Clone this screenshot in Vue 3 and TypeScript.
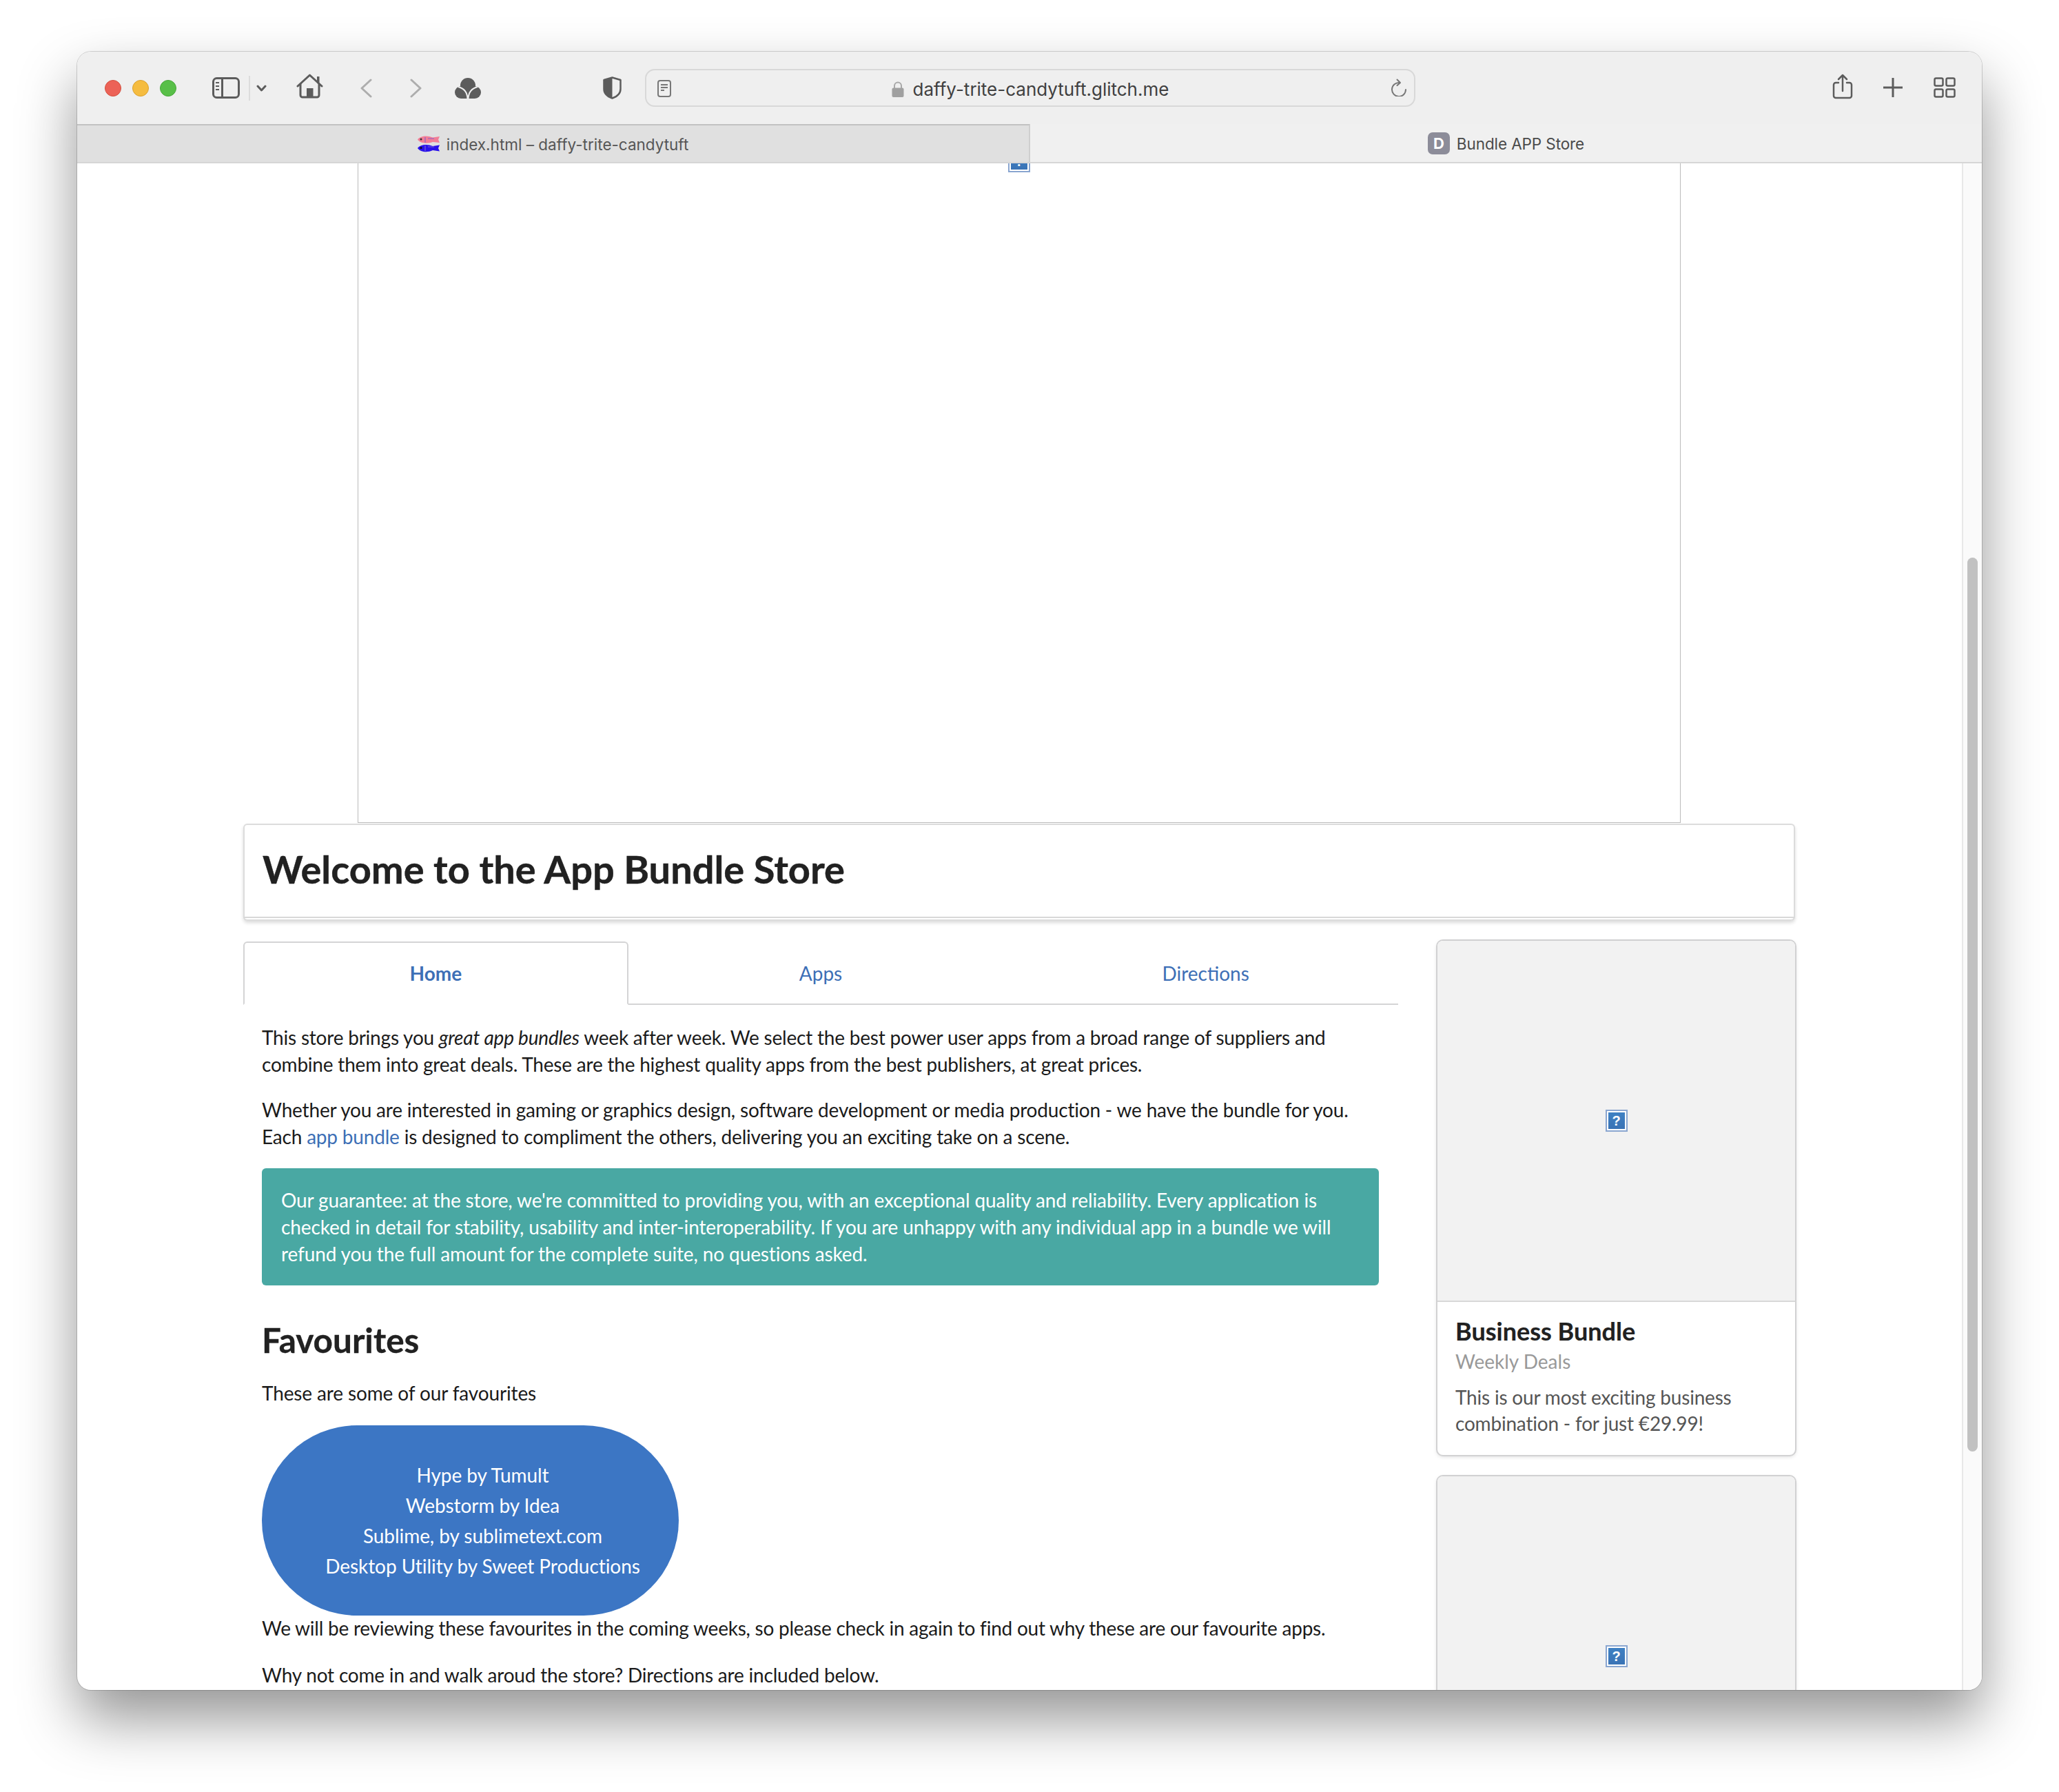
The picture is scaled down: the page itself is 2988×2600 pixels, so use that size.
<script setup lang="ts">
interface Card { title?: string; meta?: string; text?: string }
const favourites: string[] = [
  'Hype by Tumult',
  'Webstorm by Idea',
  'Sublime, by sublimetext.com',
  'Desktop Utility by Sweet Productions',
]
const tabs: string[] = ['Home', 'Apps', 'Directions']
const cards: Card[] = [
  { title: 'Business Bundle', meta: 'Weekly Deals', text: 'This is our most exciting business combination - for just €29.99!' },
  {},
]
</script>

<template>
  <div class="app">
    <div class="window">
      <div class="toolbar">
        <span class="light red"></span>
        <span class="light yellow"></span>
        <span class="light green"></span>
        <svg class="i-sidebar" width="40" height="31" viewBox="0 0 40 31" fill="none" stroke="#5c5c5c">
          <rect x="1.5" y="1.5" width="37" height="28" rx="5" stroke-width="3" />
          <path d="M14.5 2v27" stroke-width="3" />
          <path d="M5 8h5M5 13h5M5 18h5" stroke-width="2" />
        </svg>
        <span class="divider"></span>
        <svg class="i-chev" width="15" height="10" viewBox="0 0 15 10" fill="none" stroke="#5c5c5c" stroke-width="3" stroke-linecap="round" stroke-linejoin="round">
          <path d="M2 2l5.5 6L13 2" />
        </svg>
        <svg class="i-home" width="39" height="36" viewBox="0 0 39 36" fill="none" stroke="#5c5c5c">
          <path d="M2 18L19.5 2 37 18" stroke-width="3" stroke-linecap="round" stroke-linejoin="round" />
          <path d="M6 14v17a3 3 0 0 0 3 3h21a3 3 0 0 0 3-3V14" stroke-width="3" />
          <rect x="15" y="21" width="9.5" height="13" fill="#5c5c5c" stroke="none" />
          <rect x="30" y="4" width="3.5" height="10" fill="#5c5c5c" stroke="none" />
        </svg>
        <svg class="i-back" width="17" height="28" viewBox="0 0 17 28" fill="none" stroke="#adadad" stroke-width="3" stroke-linecap="round" stroke-linejoin="round">
          <path d="M15 2L2 14l13 12" />
        </svg>
        <svg class="i-forward" width="17" height="28" viewBox="0 0 17 28" fill="none" stroke="#adadad" stroke-width="3" stroke-linecap="round" stroke-linejoin="round">
          <path d="M2 2l13 12L2 26" />
        </svg>
        <svg class="i-tri" width="38" height="30" viewBox="0 0 38 30">
          <circle cx="19" cy="11" r="11" fill="#5c5c5c" />
          <circle cx="9" cy="21" r="9" fill="#5c5c5c" />
          <circle cx="29" cy="21" r="9" fill="#5c5c5c" />
          <rect x="9" y="14" width="20" height="16" fill="#5c5c5c" />
          <path d="M5 13c8 2 13 8 13.500 17M33 13c-8 2-13 8-13.500 17" fill="none" stroke="#efefef" stroke-width="2" />
        </svg>
        <svg class="i-shield" width="27" height="33" viewBox="0 0 27 33">
          <path d="M13.5 1.5L25.5 5v13c0 7-6 11.500-12 13.500-6-2-12-6.500-12-13.500V5z" fill="none" stroke="#5c5c5c" stroke-width="2.500" stroke-linejoin="round" />
          <path d="M13.500 1.500L1.500 5v13c0 7 6 11.500 12 13.500z" fill="#5c5c5c" />
        </svg>
        <div class="urlbar">
          <svg class="i-reader" width="20" height="25" viewBox="0 0 20 25" fill="none" stroke="#777">
            <rect x="1" y="1" width="18" height="23" rx="3" stroke-width="2" />
            <path d="M5 7h10M5 11h10M5 15h5" stroke-width="2" />
          </svg>
          <div class="url">
            <svg width="18" height="23" viewBox="0 0 18 23" fill="none">
              <path d="M4 10V6.500a5 5 0 0 1 10 0V10" stroke="#a8a8a8" stroke-width="2" />
              <rect x="0.500" y="9.500" width="17" height="13.500" rx="2" fill="#a0a0a0" />
            </svg>
            <span>daffy-trite-candytuft.glitch.me</span>
          </div>
          <svg class="i-reload" width="24" height="26" viewBox="0 0 24 26" fill="none" stroke="#777" stroke-width="2" stroke-linecap="round" stroke-linejoin="round">
            <path d="M13 6a10 10 0 1 0 9 10" />
            <path d="M9.500 1.500L14 6l-4.500 4" />
          </svg>
        </div>
        <svg class="i-share" width="30" height="37" viewBox="0 0 30 37" fill="none" stroke="#5c5c5c" stroke-width="2.500" stroke-linecap="round" stroke-linejoin="round">
          <path d="M9 13H5a3 3 0 0 0-3 3v16a3 3 0 0 0 3 3h20a3 3 0 0 0 3-3V16a3 3 0 0 0-3-3h-4" />
          <path d="M15 25V2M9 8l6-6 6 6" />
        </svg>
        <svg class="i-plus" width="28" height="28" viewBox="0 0 28 28" fill="none" stroke="#5c5c5c" stroke-width="3">
          <path d="M14 0v28M0 14h28" />
        </svg>
        <svg class="i-grid" width="32" height="30" viewBox="0 0 32 30" fill="none" stroke="#5c5c5c" stroke-width="2.500">
          <rect x="1.500" y="1.500" width="12" height="11" rx="2" />
          <rect x="18.500" y="1.500" width="12" height="11" rx="2" />
          <rect x="1.500" y="17.500" width="12" height="11" rx="2" />
          <rect x="18.500" y="17.500" width="12" height="11" rx="2" />
        </svg>
      </div>

      <div class="tabbar">
        <div class="btab inactive">
          <svg width="32" height="26" viewBox="0 0 32 26">
            <path d="M0 6.500C4 1 14 0 22 3.500L32 2l-2 4.500 2 4.500-10-1C14 13 4 12 0 6.500z" fill="#f27e96" />
            <path d="M0 19C4 13.500 14 12.500 22 16l10-1.500-2 4.500 2 4.500-10-1.500C14 26 4 24.500 0 19z" fill="#2a12ea" />
            <circle cx="5" cy="6" r="1.500" fill="#333" />
            <circle cx="5" cy="18.500" r="1.500" fill="#111" />
            <path d="M11 3v8M15 5h9" stroke="#8a60c8" stroke-width="1.200" fill="none" />
            <path d="M11 15v8M15 17h9" stroke="#7a60d8" stroke-width="1.200" fill="none" />
          </svg>
          <span>index.html – daffy-trite-candytuft</span>
        </div>
        <div class="btab">
          <span class="dfav">D</span>
          <span class="bundle-name">Bundle APP Store</span>
        </div>
      </div>

      <div class="viewport">
        <div class="page">
          <div class="frame">
            <div class="broken">?</div>
          </div>

          <div class="container">
            <div class="stacked">
              <h1>Welcome to the App Bundle Store</h1>
            </div>

            <div class="columns">
              <div class="left">
                <div class="menu">
                  <a v-for="(tab, i) in tabs" :key="tab" class="item" :class="{ active: i === 0 }">{{ tab }}</a>
                </div>
                <div class="panel">
                  <p class="first">This store brings you <em>great app bundles</em> week after week. We select the best power user apps from a broad range of suppliers and combine them into great deals. These are the highest quality apps from the best publishers, at great prices.</p>
                  <p class="second">Whether you are interested in gaming or graphics design, software development or media production - we have the bundle for you. Each <a class="link">app bundle</a> is designed to compliment the others, delivering you an exciting take on a scene.</p>
                  <div class="guarantee">Our guarantee: at the store, we're committed to providing you, with an exceptional quality and reliability. Every application is checked in detail for stability, usability and inter-interoperability. If you are unhappy with any individual app in a bundle we will refund you the full amount for the complete suite, no questions asked.</div>
                  <h2>Favourites</h2>
                  <p class="lead">These are some of our favourites</p>
                  <ul class="pill">
                    <li v-for="f in favourites" :key="f">{{ f }}</li>
                  </ul>
                  <p class="after">We will be reviewing these favourites in the coming weeks, so please check in again to find out why these are our favourite apps.</p>
                  <p>Why not come in and walk aroud the store? Directions are included below.</p>
                </div>
              </div>

              <div class="right">
                <div v-for="(c, i) in cards" :key="i" class="card">
                  <div class="image"><div class="broken">?</div></div>
                  <div v-if="c.title" class="content">
                    <div class="title">{{ c.title }}</div>
                    <div class="meta">{{ c.meta }}</div>
                    <div class="desc">{{ c.text }}</div>
                  </div>
                </div>
              </div>
            </div>
          </div>
        </div>
        <div class="scrollbar"><div class="thumb"></div></div>
      </div>
    </div>
  </div>
</template>

<style>
html, body { margin: 0; background: #fff; }
</style>

<style scoped>
.app {
  width: 2988px;
  height: 2600px;
  box-sizing: border-box;
  padding: 75px 0 0 112px;
  background: #fff;
  overflow: hidden;
  font-family: Lato, "Noto Sans", sans-serif;
}
.window {
  width: 2764px;
  height: 2377px;
  border-radius: 20px;
  overflow: hidden;
  display: flex;
  flex-direction: column;
  background: #fff;
  box-shadow: 0 42px 84px rgba(0, 0, 0, 0.42), 0 0 0 1px rgba(0, 0, 0, 0.16);
}

/* toolbar */
.toolbar {
  flex: none;
  height: 105px;
  background: #efefef;
  display: flex;
  align-items: center;
  padding-left: 40px;
}
.toolbar > svg { flex: none; }
.light { width: 24px; height: 24px; border-radius: 50%; box-sizing: border-box; margin-right: 16px; flex: none; }
.red { background: #ec6257; border: 1px solid #d3503f; }
.yellow { background: #f5bc40; border: 1px solid #dba12f; }
.green { background: #58bf48; border: 1px solid #48a63a; }
.i-sidebar { margin-left: 36px; }
.divider { width: 2px; height: 36px; background: #dcdcdc; margin-left: 13px; flex: none; }
.i-chev { margin-left: 9px; }
.i-home { margin-left: 43px; margin-top: -5px; }
.i-back { margin-left: 54px; }
.i-forward { margin-left: 55px; }
.i-tri { margin-left: 48px; }
.i-shield { margin-left: 177px; }
.urlbar {
  flex: none;
  position: relative;
  margin-left: 34px;
  width: 1118px;
  height: 55px;
  box-sizing: border-box;
  border: 2px solid #d8d8d8;
  border-radius: 14px;
  display: flex;
  align-items: center;
  justify-content: center;
}
.i-reader { position: absolute; left: 16px; top: 14px; }
.i-reload { position: absolute; right: 10px; top: 12px; }
.url {
  display: flex;
  align-items: center;
  gap: 13px;
  margin-top: 4px;
  font-family: Inter, "Noto Sans", sans-serif;
  font-size: 26px;
  color: #404040;
}
.i-share { margin-left: 605px; margin-top: -4px; }
.i-plus { margin-left: 44px; margin-top: -2px; }
.i-grid { margin-left: 45px; margin-top: -2px; }

/* tabs of the browser */
.tabbar {
  flex: none;
  height: 57px;
  box-sizing: border-box;
  border-bottom: 2px solid #d6d6d6;
  background: #f0f0f0;
  display: flex;
  font-family: Inter, "Noto Sans", sans-serif;
  font-size: 22.5px;
  color: #4a4a4a;
}
.btab {
  flex: 1;
  display: flex;
  align-items: center;
  justify-content: center;
  gap: 10px;
  padding-top: 1px;
}
.btab.inactive {
  background: #e0e0e0;
  border-top: 2px solid #c2c2c2;
  border-right: 2px solid #cfcfcf;
  color: #565656;
}
.bundle-name { letter-spacing: -0.1px; }
.dfav {
  width: 32px;
  height: 32px;
  border-radius: 7px;
  background: #8c8c99;
  color: #fff;
  font-weight: 700;
  font-size: 22px;
  display: flex;
  align-items: center;
  justify-content: center;
}

/* viewport */
.viewport {
  flex: 1;
  min-height: 0;
  display: flex;
  overflow: hidden;
}
.page {
  flex: 1;
  min-width: 0;
  margin-top: -19px;
  height: 3000px;
  color: #1b1b1b;
  font-size: 28px;
  line-height: 39px;
}
.scrollbar {
  flex: none;
  width: 29px;
  box-sizing: border-box;
  background: #fafafa;
  border-left: 2px solid #e8e8e8;
  padding: 572px 6px 0 6px;
}
.thumb {
  height: 1297px;
  border-radius: 8px;
  background: #c1c1c1;
}
.frame {
  width: 1920px;
  height: 976px;
  box-sizing: border-box;
  margin-left: 407px;
  border: 1px solid #bbb;
  border-top: 0;
  display: flex;
  justify-content: center;
}
.broken {
  width: 32px;
  height: 32px;
  box-sizing: border-box;
  border: 2px solid #8aa6d0;
  outline: 2px solid #fff;
  outline-offset: -4px;
  background: linear-gradient(#3f82c4, #3a72b4);
  color: #fff;
  font-family: "Liberation Sans", sans-serif;
  font-weight: 700;
  font-size: 20px;
  line-height: 28px;
  text-align: center;
  flex: none;
}

.container {
  width: 2252px;
  margin-left: 241px;
}
.stacked {
  margin-top: 1px;
  height: 141px;
  box-sizing: border-box;
  position: relative;
  background: #fff;
  border: 2px solid #dcdcdc;
  border-bottom: 0;
  border-radius: 6px;
  padding: 28px 26px 0;
  box-shadow: 0 3px 5px rgba(0, 0, 0, 0.14);
}
.stacked::after {
  content: "";
  position: absolute;
  left: -2px;
  right: -2px;
  bottom: 0;
  height: 6px;
  border-top: 2px solid #d8d8d8;
  border-bottom: 2px solid #dcdcdc;
  border-left: 2px solid #dcdcdc;
  border-right: 2px solid #dcdcdc;
  box-sizing: border-box;
  border-radius: 0 0 6px 6px;
}
h1 {
  margin: 0;
  font-size: 56px;
  line-height: 72px;
  font-weight: 700;
  letter-spacing: -0.03px;
  color: #212121;
  -webkit-text-stroke: 0.4px #212121;
}
.columns {
  display: flex;
  margin-top: 27px;
  gap: 55px;
}
.left { width: 1676px; flex: none; padding-top: 3px; }
.right { width: 523px; flex: none; display: flex; flex-direction: column; gap: 27px; }

.menu {
  display: flex;
  height: 92px;
  box-sizing: border-box;
  border-bottom: 2px solid #d4d4d5;
}
.item {
  flex: 1;
  height: 92px;
  box-sizing: border-box;
  display: flex;
  align-items: center;
  justify-content: center;
  color: #3d6fb6;
  border: 2px solid transparent;
}
.item.active {
  font-weight: 700;
  background: #fff;
  border-color: #d4d4d5;
  border-bottom-color: #fff;
  border-radius: 6px 6px 0 0;
}
.panel { padding: 28px 27px 0; width: 1621px; }
p { margin: 0 0 27px; letter-spacing: -0.2px; }
p.first { letter-spacing: -0.21px; }
p.second { letter-spacing: -0.19px; }
.link { color: #3d6fb6; }
.guarantee {
  background: #49a8a3;
  color: #fff;
  border-radius: 6px;
  margin-top: -1px;
  padding: 27px 28px 26px;
  letter-spacing: -0.12px;
}
h2 {
  margin: 48px 0 27px;
  font-size: 49.500px;
  line-height: 62px;
  font-weight: 700;
  color: #212121;
  -webkit-text-stroke: 0.3px #212121;
}
p.lead { letter-spacing: -0.13px; }
.pill {
  list-style: none;
  margin: 0;
  width: 605px;
  box-sizing: border-box;
  padding: 50px 0 50px 36px;
  border-radius: 138px;
  background: #3c76c4;
  color: #fff;
  text-align: center;
  line-height: 44px;
  letter-spacing: -0.06px;
}
p.after { margin: -1px 0 29px; letter-spacing: -0.24px; }

.card {
  flex: none;
  background: #fff;
  border-radius: 8px;
  box-shadow: 0 2px 6px #d4d4d5, 0 0 0 2px #d0d0d1;
  overflow: hidden;
  margin: 2px;
}
.image {
  height: 522px;
  background: #f2f2f2;
  display: flex;
  align-items: center;
  justify-content: center;
  border-bottom: 2px solid #d8d8d8;
}
.content { padding: 18px 26px 27px; }
.title { font-size: 36px; line-height: 48px; font-weight: 700; color: #212121; -webkit-text-stroke: 0.2px #212121; }
.meta { color: #999; line-height: 40px; }
.desc { color: #555; margin-top: 13px; line-height: 38px; letter-spacing: -0.2px; }
</style>
